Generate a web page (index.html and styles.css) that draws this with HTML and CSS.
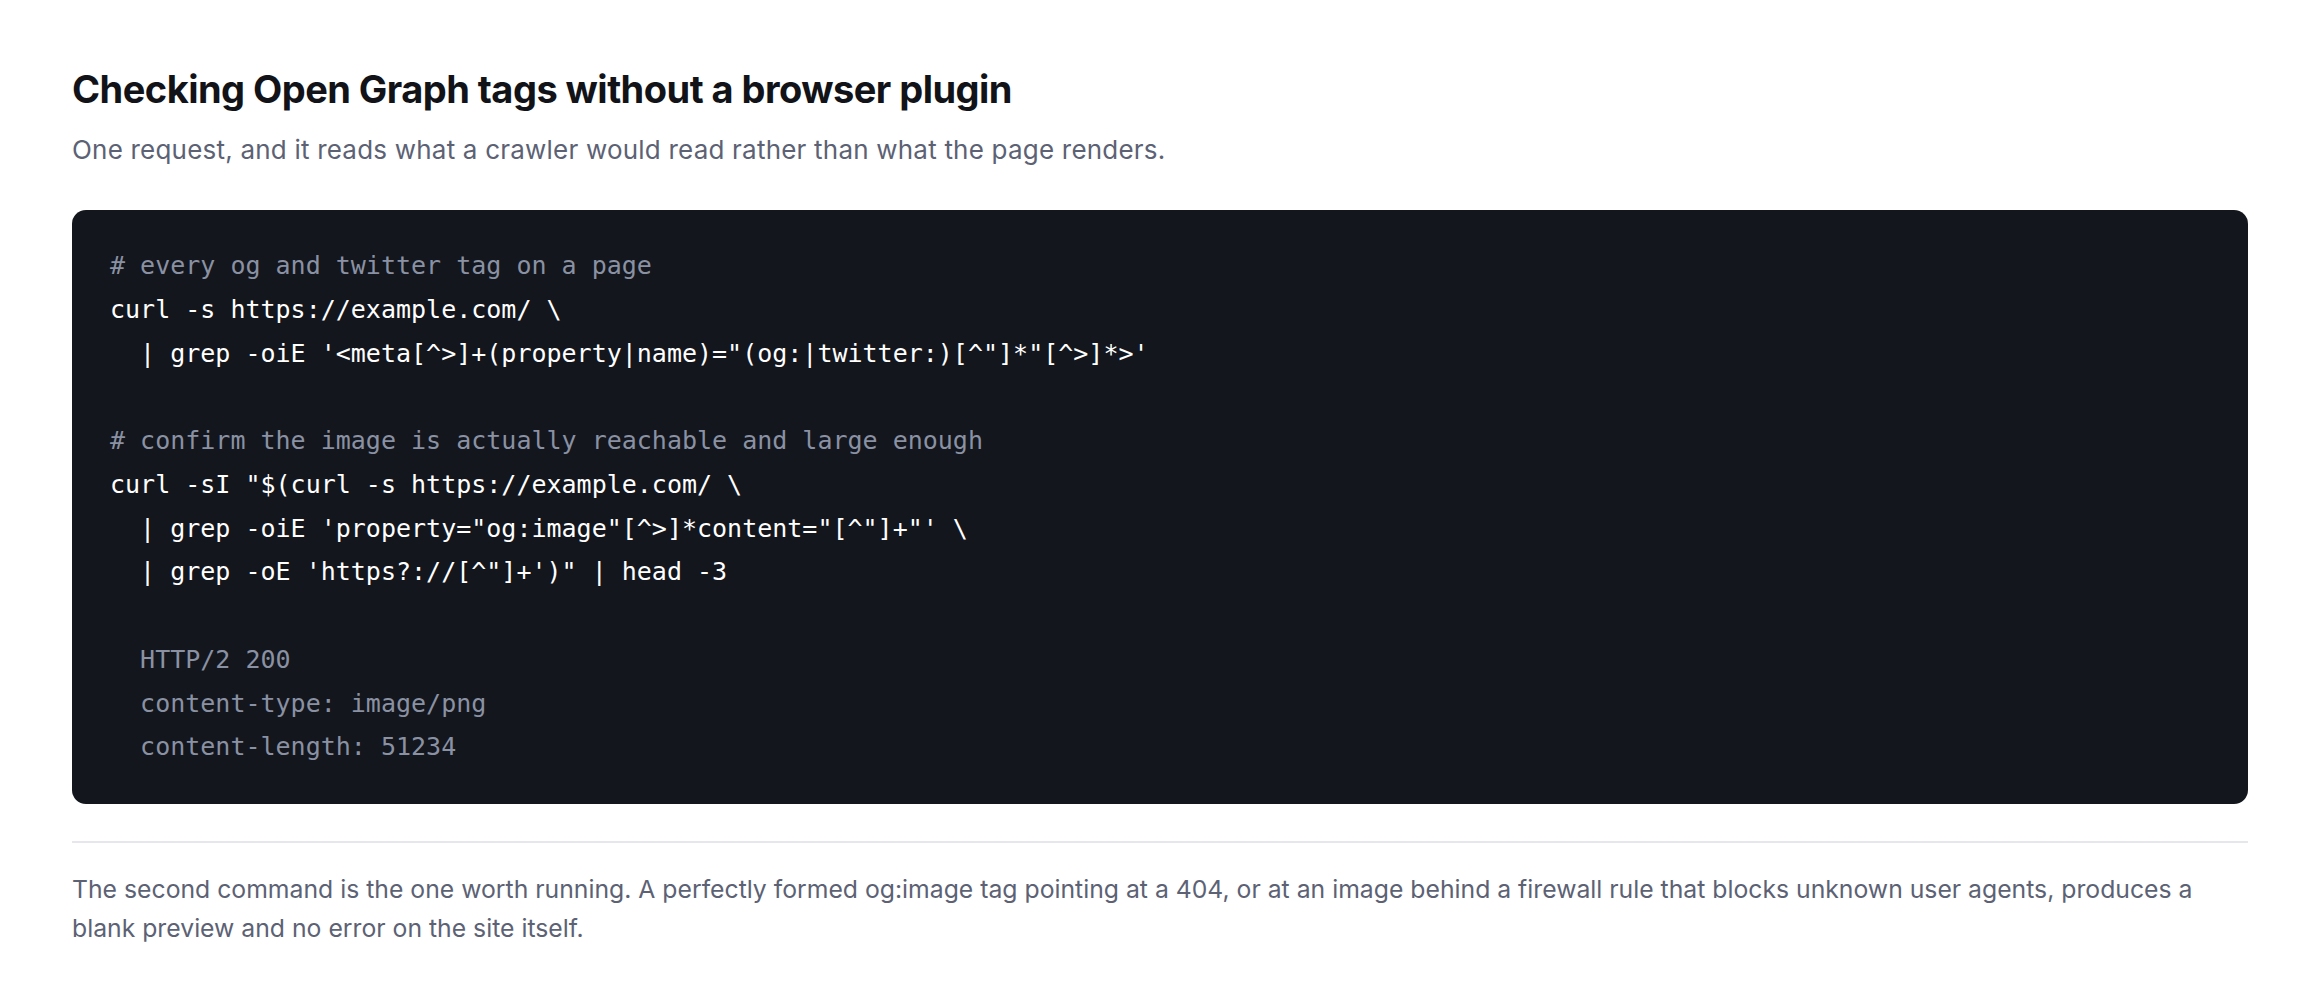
FILE: index.html
```html
<!DOCTYPE html>
<html lang="en">
<head>
<meta charset="utf-8">
<title>Checking Open Graph tags without a browser plugin</title>
<link rel="stylesheet" href="styles.css">
</head>
<body>
<main class="article">
  <header class="article-head">
    <h1 class="title">Checking Open Graph tags without a browser plugin</h1>
    <p class="lede">One request, and it reads what a crawler would read rather than what the page renders.</p>
  </header>
  <pre class="code"><code><span class="c"># every og and twitter tag on a page</span>
curl -s https://example.com/ \
  | grep -oiE '&lt;meta[^&gt;]+(property|name)="(og:|twitter:)[^"]*"[^&gt;]*&gt;'

<span class="c"># confirm the image is actually reachable and large enough</span>
curl -sI "$(curl -s https://example.com/ \
  | grep -oiE 'property="og:image"[^&gt;]*content="[^"]+"' \
  | grep -oE 'https?://[^"]+')" | head -3

<span class="o">  HTTP/2 200
  content-type: image/png
  content-length: 51234</span></code></pre>
  <hr class="rule">
  <p class="note">The second command is the one worth running. A perfectly formed og:image tag pointing at a 404, or at an image behind a firewall rule that blocks unknown user agents, produces a blank preview and no error on the site itself.</p>
</main>
</body>
</html>
```

FILE: styles.css
```css
* { box-sizing: border-box; }
html, body { margin: 0; padding: 0; background: #ffffff; }
body {
  font-family: Inter, "Noto Sans", "Liberation Sans", sans-serif;
  color: #111318;
}
.article {
  padding: 65.5px 72px 40px;
  display: flex;
  flex-direction: column;
}
.article-head { display: flex; flex-direction: column; gap: 19px; }
.title {
  margin: 0;
  font-size: 38px;
  line-height: 46px;
  font-weight: 700;
  letter-spacing: -0.014em;
  color: #111318;
}
.lede {
  margin: 0;
  font-size: 26px;
  line-height: 38px;
  letter-spacing: 0.008em;
  color: #5c6274;
}
.code {
  margin: 41.5px 0 0;
  padding: 34px 38px 35px;
  background: #13161d;
  border-radius: 14px;
  font-family: "DejaVu Sans Mono", "Liberation Mono", monospace;
  font-size: 25px;
  line-height: 43.75px;
  color: #ffffff;
  overflow: hidden;
}
.code code { font: inherit; }
.code .c, .code .o { color: #8a91a3; }
.rule {
  margin: 37px 0 0;
  border: 0;
  height: 2px;
  background: #e6e7ec;
}
.note {
  margin: 27px 0 0;
  font-size: 24.75px;
  line-height: 38.5px;
  color: #5c6274;
}
```
